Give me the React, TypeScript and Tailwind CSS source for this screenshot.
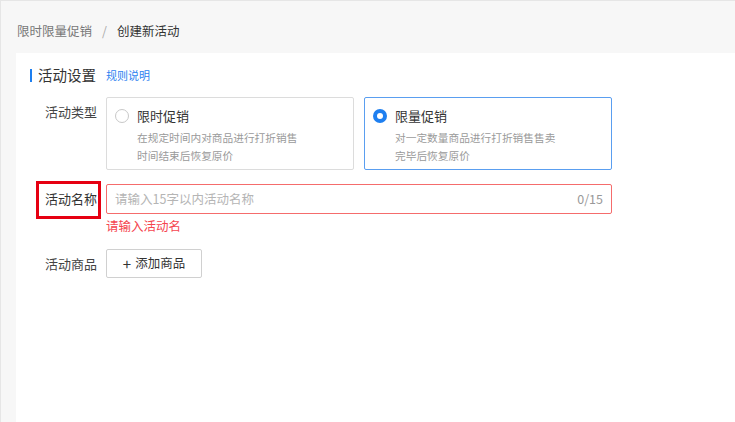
import React from "react";

const font = { fontFamily: '"Noto Sans CJK SC", "Noto Sans", sans-serif' };

function Radio({ checked }: { checked?: boolean }) {
  if (checked) {
    return (
      <span className="flex h-[14px] w-[14px] shrink-0 items-center justify-center rounded-full bg-[#1e7ff0]">
        <span className="h-[6px] w-[6px] rounded-full bg-white" />
      </span>
    );
  }
  return <span className="h-[14px] w-[14px] shrink-0 rounded-full border border-[#c8c8c8] bg-white" />;
}

function TypeOption({
  title,
  lines,
  checked,
}: {
  title: string;
  lines: string[];
  checked?: boolean;
}) {
  return (
    <div
      className={
        "h-[73px] w-[248px] rounded-[2px] border pl-[8px] pt-[8px] " +
        (checked ? "border-[#5a9ef0]" : "border-[#dcdcdc]")
      }
    >
      <div className="flex items-center gap-[8px]">
        <Radio checked={checked} />
        <span className="text-[13px] leading-[20px] text-[#333]">{title}</span>
      </div>
      <div className="mt-[3px] pl-[22px] text-[10.7px] leading-[18px] text-[#9a9a9a]">
        {lines.map((l) => (
          <div key={l}>{l}</div>
        ))}
      </div>
    </div>
  );
}

export default function App() {
  const [name, setName] = React.useState("");

  return (
    <div
      style={font}
      className="flex h-[422px] w-[735px] flex-col overflow-hidden border-l border-t border-[#e6e6e6] bg-[#f7f7f7]"
    >
      {/* breadcrumb */}
      <div className="flex h-[52px] items-center pl-[16px] pt-[8px] text-[12.5px]">
        <span className="text-[#777]">限时限量促销</span>
        <span className="mx-[10px] text-[#aaa]">/</span>
        <span className="text-[#333]">创建新活动</span>
      </div>

      <div className="ml-[15px] flex-1 bg-white pl-[14px] pt-[14px]">
        {/* section title */}
        <div className="flex h-[16px] items-center">
          <span className="h-[13px] w-[2px] bg-[#1e7ff0]" />
          <span className="ml-[6px] text-[14.5px] text-[#333]">活动设置</span>
          <span className="ml-[10px] text-[11px] text-[#2d7ff0]">规则说明</span>
        </div>

        {/* 活动类型 */}
        <div className="mt-[14px] flex">
          <div className="w-[67px] pt-[5px] text-right text-[13px] leading-[20px] text-[#444]">活动类型</div>
          <div className="ml-[9px] flex gap-[10px]">
            <TypeOption
              title="限时促销"
              lines={["在规定时间内对商品进行打折销售", "时间结束后恢复原价"]}
            />
            <TypeOption
              title="限量促销"
              checked
              lines={["对一定数量商品进行打折销售售卖", "完毕后恢复原价"]}
            />
          </div>
        </div>

        {/* 活动名称 */}
        <div className="mt-[14px] flex">
          <div className="relative flex h-[30px] w-[67px] items-center justify-end text-[13px] text-[#333]">
            活动名称
            <span className="pointer-events-none absolute left-[6px] top-[-3px] h-[38px] w-[65px] border-[3px] border-[#e60012]" />
          </div>
          <div className="ml-[9px] w-[506px]">
            <div className="flex h-[30px] items-center rounded-[2px] border border-[#f56c6c] px-[8px]">
              <input
                value={name}
                onChange={(e) => setName(e.target.value.slice(0, 15))}
                placeholder="请输入15字以内活动名称"
                className="min-w-0 flex-1 bg-transparent text-[12.5px] text-[#333] outline-none placeholder:text-[#b5b5b5]"
              />
              <span className="text-[12.5px] text-[#999]">{name.length}/15</span>
            </div>
            <div className="mt-[3px] text-[12.5px] leading-[18px] text-[#f5454f]">请输入活动名</div>
          </div>
        </div>

        {/* 活动商品 */}
        <div className="mt-[14px] flex items-center">
          <div className="w-[67px] text-right text-[13px] text-[#444]">活动商品</div>
          <button className="ml-[9px] flex h-[29px] w-[96px] items-center justify-center gap-[4px] rounded-[2px] border border-[#d0d0d0] bg-white text-[12.5px] text-[#333]">
            <span className="text-[15px] leading-none">+</span>
            添加商品
          </button>
        </div>
      </div>
    </div>
  );
}
